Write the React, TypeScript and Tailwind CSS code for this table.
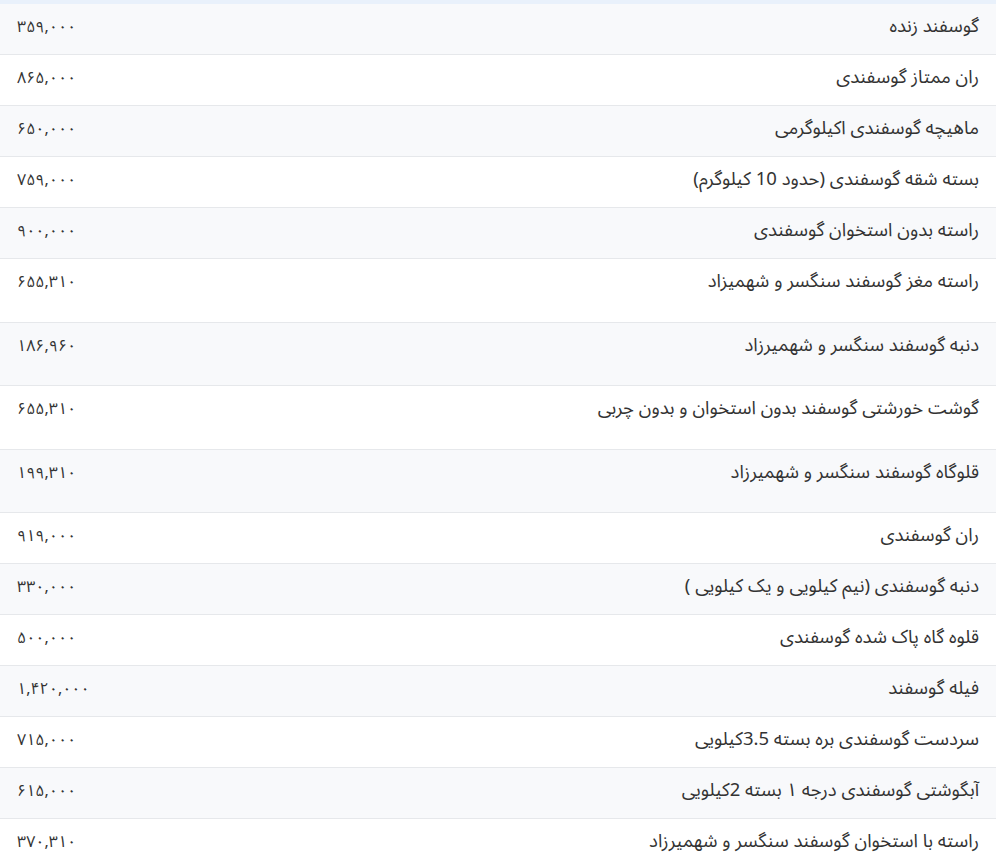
import React from "react";

type Row = { name: string; price: string; tall?: boolean };

const rows: Row[] = [
  { name: "گوسفند زنده", price: "۳۵۹,۰۰۰" },
  { name: "ران ممتاز گوسفندی", price: "۸۶۵,۰۰۰" },
  { name: "ماهیچه گوسفندی اکیلوگرمی", price: "۶۵۰,۰۰۰" },
  { name: "بسته شقه گوسفندی (حدود 10 کیلوگرم)", price: "۷۵۹,۰۰۰" },
  { name: "راسته بدون استخوان گوسفندی", price: "۹۰۰,۰۰۰" },
  { name: "راسته مغز گوسفند سنگسر و شهمیزاد", price: "۶۵۵,۳۱۰", tall: true },
  { name: "دنبه گوسفند سنگسر و شهمیرزاد", price: "۱۸۶,۹۶۰", tall: true },
  { name: "گوشت خورشتی گوسفند بدون استخوان و بدون چربی", price: "۶۵۵,۳۱۰", tall: true },
  { name: "قلوگاه گوسفند سنگسر و شهمیرزاد", price: "۱۹۹,۳۱۰", tall: true },
  { name: "ران گوسفندی", price: "۹۱۹,۰۰۰" },
  { name: "دنبه گوسفندی (نیم کیلویی و یک کیلویی )", price: "۳۳۰,۰۰۰" },
  { name: "قلوه گاه پاک شده گوسفندی", price: "۵۰۰,۰۰۰" },
  { name: "فیله گوسفند", price: "۱,۴۲۰,۰۰۰" },
  { name: "سردست گوسفندی بره بسته 3.5کیلویی", price: "۷۱۵,۰۰۰" },
  { name: "آبگوشتی گوسفندی درجه ۱ بسته 2کیلویی", price: "۶۱۵,۰۰۰" },
  { name: "راسته با استخوان گوسفند سنگسر و شهمیرزاد", price: "۳۷۰,۳۱۰" },
];

export default function App() {
  return (
    <div
      dir="rtl"
      className="w-full min-h-screen bg-white text-[#333333]"
      style={{ fontFamily: '"Noto Sans Arabic", "DejaVu Sans", "Noto Sans", sans-serif' }}
    >
      <div className="h-[4px] bg-[#e9f1fb]" />
      <div className="flex flex-col">
        {rows.map((r, i) => (
          <div
            key={i}
            className={
              (i % 2 === 0 ? "bg-[#f8f9fb] " : "bg-white ") +
              (r.tall ? "h-[63.5px] " : "h-[51px] ") +
              "flex justify-between border-b border-[#e6e8eb] px-[17px] pt-[10px]"
            }
          >
            <div className="text-[18.5px] leading-[26px]">{r.name}</div>
            <div className="text-[16px] leading-[26px]">{r.price}</div>
          </div>
        ))}
      </div>
    </div>
  );
}
